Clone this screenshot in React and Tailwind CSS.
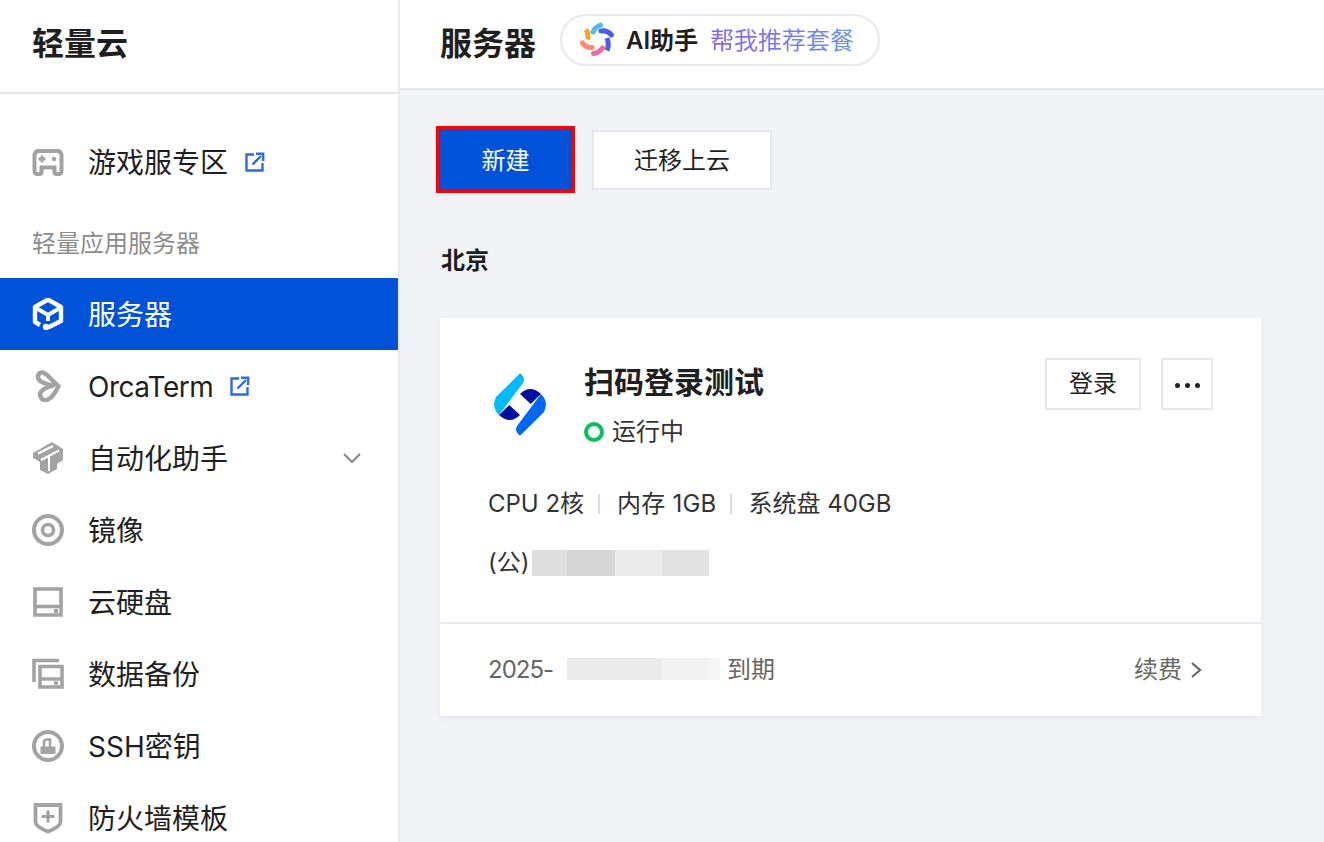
import React from 'react';

const FONT = { fontFamily: 'Inter, "Noto Sans CJK SC", sans-serif' };
const GRAY = '#a3a3a3';

const GameIcon = () => (
    <svg width="32" height="32" viewBox="0 0 32 32" fill="none">
        <path d="M7 5H25Q29 5 29.500 9V25Q29.500 28 26.500 28H24.500Q22.500 28 22.500 26V21.500H9.500V26Q9.500 28 7.500 28H5.500Q2.500 28 2.500 25V9Q3 5 7 5Z" stroke={GRAY} strokeWidth="4" />
        <path d="M6.500 13H13.500M10 9.500V16.500" stroke={GRAY} strokeWidth="2.800" />
        <circle cx="22" cy="13" r="2.200" fill={GRAY} />
    </svg>
);

const ServerIcon = () => (
    <svg width="32" height="32" viewBox="4 4 32 32" fill="none">
        <path d="M12 31L7 28V13L20 5.500L33 13V27L20 33.500" stroke="#fff" strokeWidth="4.400" strokeLinejoin="round" />
        <path d="M8 14L20 21L32 14" stroke="#fff" strokeWidth="4" />
        <path d="M20 21V27" stroke="#fff" strokeWidth="4" />
        <circle cx="18" cy="33" r="3.200" fill="#fff" />
    </svg>
);

const OrcaIcon = () => (
    <svg width="32" height="32" viewBox="4 4 32 32" fill="none">
        <path d="M30.500 20Q27 17 18.500 8.500Q12.500 4 10 9.500Q9 14.500 16 17Q21 19 25 19.500Q14 22 12 28Q12.500 35 19 34Q25 32 30.500 20Z" stroke={GRAY} strokeWidth="4.400" strokeLinejoin="round" />
    </svg>
);

const AutoIcon = () => (
    <svg width="32" height="32" viewBox="4 4 32 32" fill="none">
        <path d="M5 15L24 4L35 11V22L29 26V31L20 36L12 32V24L5 20Z" fill={GRAY} />
        <path d="M10 15.500L25 8M13 22L31 12.500M21 18V33" stroke="#fff" strokeWidth="2" />
    </svg>
);

const ImageIcon = () => (
    <svg width="32" height="32" viewBox="0 0 32 32" fill="none">
        <circle cx="16" cy="16" r="14" stroke={GRAY} strokeWidth="4" />
        <circle cx="16" cy="16" r="5.500" stroke={GRAY} strokeWidth="3.600" />
    </svg>
);

const DiskIcon = () => (
    <svg width="32" height="32" viewBox="0 0 32 32" fill="none">
        <path d="M3 3H29V29H3Z" stroke={GRAY} strokeWidth="3.600" />
        <path d="M3 20.500H29" stroke={GRAY} strokeWidth="3.600" />
        <path d="M22 25H26" stroke={GRAY} strokeWidth="4" />
    </svg>
);

const BackupIcon = () => (
    <svg width="32" height="32" viewBox="0 0 32 32" fill="none">
        <path d="M27 2.500H2V24" stroke={GRAY} strokeWidth="3.600" />
        <path d="M8 8.500H30V29H8Z" stroke={GRAY} strokeWidth="3.600" />
        <path d="M8 21H30" stroke={GRAY} strokeWidth="3.400" />
        <path d="M22 25H26" stroke={GRAY} strokeWidth="3.400" />
    </svg>
);

const KeyIcon = () => (
    <svg width="32" height="32" viewBox="0 0 32 32" fill="none">
        <circle cx="16" cy="16" r="14" stroke={GRAY} strokeWidth="4" />
        <path d="M12 17V12Q12 9.500 15 9.500H18V17" stroke={GRAY} strokeWidth="2.600" />
        <rect x="8.500" y="16.500" width="15" height="7.500" fill={GRAY} />
    </svg>
);

const ShieldIcon = () => (
    <svg width="32" height="32" viewBox="0 0 32 32" fill="none">
        <path d="M3.500 3H28.500V20C28.500 24 21 27.500 16 29.500C11 27.500 3.500 24 3.500 20Z" stroke={GRAY} strokeWidth="3.800" />
        <path d="M9.500 14.500H22.500M16 8.500V20.500" stroke={GRAY} strokeWidth="3.200" />
    </svg>
);

const ExternalIcon = () => (
    <svg width="20" height="20" viewBox="0 0 20 20" fill="none" className="shrink-0">
        <path d="M9 2.500H1.500V18.500H17.500V11" stroke="#2a6ae6" strokeWidth="2.400" />
        <path d="M7.500 12.500L16 4" stroke="#2a6ae6" strokeWidth="2.400" />
        <path d="M11 1.800H18.200V9" stroke="#2a6ae6" strokeWidth="2.400" />
    </svg>
);

const AiIcon = () => (
    <svg width="50" height="50" viewBox="0 0 50 50" fill="none" strokeWidth="5" className="shrink-0">
        <path d="M12 14.500Q15 19 13.500 24.500" stroke="#f5a623" />
        <path d="M19 17Q21 12 26.500 10" stroke="#4fb8f0" strokeLinecap="round" />
        <path d="M27 16Q33 15 37.500 20" stroke="#4a5cf5" strokeLinecap="round" />
        <path d="M33 23Q35.500 30 33 35.500" stroke="#4a5cf5" />
        <path d="M19.500 38.500Q25 38 28.500 33" stroke="#f06a9c" strokeLinecap="round" />
        <path d="M8.500 28Q12 33 18 32.500" stroke="#ff8a70" strokeLinecap="round" />
    </svg>
);

const CardLogo = () => (
    <svg width="54" height="64" viewBox="8 8 54 64" className="shrink-0">
        <path d="M35 8.300Q41 13 38 18L14 50Q6 42 11 32Z" fill="#00bbff" />
        <path d="M14 50L24.300 40L35 50Q25 60 14 50Z" fill="#000f9c" />
        <g transform="rotate(180 35 39.500)">
            <path d="M14 50L24.300 40L35 50Q25 60 14 50Z" fill="#000f9c" />
            <path d="M35 8.300Q41 13 38 18L14 50Q6 42 11 32Z" fill="#0068ee" />
        </g>
    </svg>
);

const NAV = [
    { label: '服务器', icon: ServerIcon, active: true },
    { label: 'OrcaTerm', icon: OrcaIcon, external: true, tight: true },
    { label: '自动化助手', icon: AutoIcon, chevron: true },
    { label: '镜像', icon: ImageIcon },
    { label: '云硬盘', icon: DiskIcon },
    { label: '数据备份', icon: BackupIcon },
    { label: 'SSH密钥', icon: KeyIcon },
    { label: '防火墙模板', icon: ShieldIcon },
];

function NavItem({ item }) {
    const Icon = item.icon;
    return (
        <div className={`flex h-[72px] shrink-0 items-center pl-8 pr-9 text-[28px] ${item.active ? 'bg-[#0052d9] text-white' : 'text-[#1f1f1f]'}`}>
            <Icon />
            <span className={`ml-6 pt-0.5 leading-none ${item.tight ? 'tracking-[-0.5px]' : ''}`}>{item.label}</span>
            {item.external && <span className="ml-[17px]"><ExternalIcon /></span>}
            {item.chevron && (
                <svg width="20" height="12" viewBox="0 0 20 12" fill="none" className="ml-auto">
                    <path d="M2 2L10 10L18 2" stroke="#8a8a8a" strokeWidth="2.200" />
                </svg>
            )}
        </div>
    );
}

export default function App() {
    return (
        <div className="flex h-[842px] w-[1324px] overflow-hidden bg-[#f2f3f7]" style={FONT}>
            {/* sidebar */}
            <aside className="flex w-[400px] shrink-0 flex-col overflow-hidden border-r-2 border-[#e7e9ef] bg-white">
                <div className="flex h-[94px] shrink-0 items-center border-b-2 border-[#e8e8e8] pl-8 pb-1 text-[32px] font-semibold text-[#1f1f1f]">
                    轻量云
                </div>
                <div className="mt-8 flex h-[72px] shrink-0 items-center pl-8 text-[28px] text-[#1f1f1f]">
                    <GameIcon />
                    <span className="ml-6 pt-0.5 leading-none">游戏服专区</span>
                    <span className="ml-[17px]"><ExternalIcon /></span>
                </div>
                <div className="flex h-[80px] shrink-0 items-center pl-8 pt-3 text-2xl text-[#8c8c8c]">轻量应用服务器</div>
                {NAV.map((item) => <NavItem key={item.label} item={item} />)}
            </aside>

            {/* main */}
            <main className="flex min-w-0 flex-1 flex-col">
                <header className="flex h-[90px] shrink-0 items-center border-b-2 border-[#e6e8ee] bg-white pl-10">
                    <h1 className="text-[32px] font-semibold text-[#1f1f1f]">服务器</h1>
                    <div className="mb-2 ml-6 flex h-[52px] w-[320px] items-center rounded-full border-2 border-[#e8e9f0] pl-3">
                        <AiIcon />
                        <span className="ml-0.5 pt-0.5 text-2xl font-semibold text-[#1f1f1f]">AI助手</span>
                        <span className="ml-3 bg-gradient-to-r from-[#8a5ff0] to-[#5f90f5] bg-clip-text pt-0.5 text-2xl text-transparent">帮我推荐套餐</span>
                    </div>
                </header>

                <div className="flex flex-col pl-9 pt-9">
                    <div className="flex items-center">
                        <button className="h-[67px] w-[139px] border-[3.5px] border-[#ff0000] bg-[#0052d9] pt-0.5 text-2xl text-white">新建</button>
                        <button className="ml-[17px] h-[60px] w-[180px] border-2 border-[#e6e8ee] bg-white pt-0.5 text-2xl text-[#1f1f1f]">迁移上云</button>
                    </div>

                    <div className="ml-[5px] mt-[52px] text-2xl font-semibold leading-[32px] text-[#1f1f1f]">北京</div>

                    <section className="ml-1 mt-[41px] w-[821px] bg-white shadow-[0_2px_6px_rgba(0,0,0,0.06)]">
                        <div className="h-[304px] px-12 pt-10">
                            <div className="flex items-start">
                                <div className="ml-[5px] mt-[15px]"><CardLogo /></div>
                                <div className="ml-[37px] mt-1 flex-1">
                                    <div className="text-[30px] font-semibold leading-10 text-[#1f1f1f]">扫码登录测试</div>
                                    <div className="mt-2.5 flex h-10 items-center text-2xl text-[#333]">
                                        <span className="h-5 w-5 rounded-full border-[4px] border-[#0abf5b]" />
                                        <span className="ml-2">运行中</span>
                                    </div>
                                </div>
                                <button className="h-[52px] w-[96px] border-2 border-[#e6e8ee] text-2xl text-[#1f1f1f]">登录</button>
                                <button className="ml-5 flex h-[52px] w-[52px] items-center justify-center gap-[5px] border-2 border-[#e6e8ee] pt-0.5">
                                    <span className="h-[5px] w-[5px] rounded-full bg-[#1f1f1f]" />
                                    <span className="h-[5px] w-[5px] rounded-full bg-[#1f1f1f]" />
                                    <span className="h-[5px] w-[5px] rounded-full bg-[#1f1f1f]" />
                                </button>
                            </div>

                            <div className="mt-[32px] flex h-10 items-center text-2xl text-[#333]">
                                <span>CPU 2核</span>
                                <span className="ml-3.5 mr-[17px] h-5 w-0.5 bg-[#d8dde6]" />
                                <span className="tracking-[0.2px]">内存 1GB</span>
                                <span className="ml-[14px] mr-4 h-5 w-0.5 bg-[#d8dde6]" />
                                <span>系统盘 40GB</span>
                            </div>

                            <div className="mt-[19px] flex h-10 items-center text-2xl text-[#333]">
                                <span>(公)</span>
                                <div className="ml-0.5 flex h-[26px]">
                                    <span className="w-[35px] bg-[#dedede]" />
                                    <span className="w-[48px] bg-[#d6d6d6]" />
                                    <span className="w-[47px] bg-[#ebebeb]" />
                                    <span className="w-[47px] bg-[#e2e2e2]" />
                                </div>
                            </div>
                        </div>

                        <div className="flex h-[94px] items-center border-t-2 border-[#e6e9ef] px-12 text-2xl text-[#666]">
                            <span className="tracking-[-1px]">2025-</span>
                            <div className="mb-0.5 ml-3.5 flex h-[22px]">
                                <span className="w-[95px] bg-[#ebebeb]" />
                                <span className="w-[46px] bg-[#f3f3f3]" />
                                <span className="w-[12px] bg-[#f6f6f6]" />
                            </div>
                            <span className="ml-[7px]">到期</span>
                            <span className="ml-auto">续费</span>
                            <svg width="12" height="18" viewBox="0 0 12 18" fill="none" className="ml-2 mr-[11px]">
                                <path d="M2 2L10 9L2 16" stroke="#666" strokeWidth="2.200" />
                            </svg>
                        </div>
                    </section>
                </div>
            </main>
        </div>
    );
}
